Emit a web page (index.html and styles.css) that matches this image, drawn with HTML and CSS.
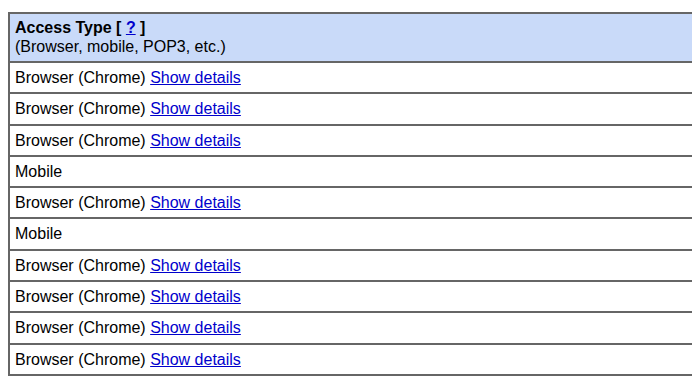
FILE: index.html
```html
<!DOCTYPE html>
<html>
<head>
<meta charset="utf-8">
<link rel="stylesheet" href="styles.css">
</head>
<body>
<table class="activity">
  <thead>
    <tr>
      <th class="col-type"><b>Access Type [ <a href="#">?</a> ]</b><br><span class="sub">(Browser, mobile, POP3, etc.)</span></th>
      <th class="col-more"></th>
    </tr>
  </thead>
  <tbody>
    <tr><td>Browser (Chrome) <a href="#">Show details</a></td><td class="col-more"></td></tr>
    <tr><td>Browser (Chrome) <a href="#">Show details</a></td><td class="col-more"></td></tr>
    <tr><td>Browser (Chrome) <a href="#">Show details</a></td><td class="col-more"></td></tr>
    <tr><td>Mobile</td><td class="col-more"></td></tr>
    <tr><td>Browser (Chrome) <a href="#">Show details</a></td><td class="col-more"></td></tr>
    <tr><td>Mobile</td><td class="col-more"></td></tr>
    <tr><td>Browser (Chrome) <a href="#">Show details</a></td><td class="col-more"></td></tr>
    <tr><td>Browser (Chrome) <a href="#">Show details</a></td><td class="col-more"></td></tr>
    <tr><td>Browser (Chrome) <a href="#">Show details</a></td><td class="col-more"></td></tr>
    <tr><td>Browser (Chrome) <a href="#">Show details</a></td><td class="col-more"></td></tr>
  </tbody>
</table>
</body>
</html>
```
FILE: styles.css
```css
html, body {
  overflow: hidden;
}
body {
  margin: 12px 8px 8px;
  font-family: "Liberation Sans", Arial, sans-serif;
  font-size: 16px;
  color: #000;
  background: #fff;
}
.activity {
  border-collapse: collapse;
  width: 692px;
  table-layout: fixed;
}
.activity th,
.activity td {
  border: 2px solid #666;
  text-align: left;
  vertical-align: top;
  line-height: 19px;
  padding: 5px 5px 5.3px;
  white-space: nowrap;
}
.activity th {
  background: #c9daf9;
  font-weight: normal;
  padding-bottom: 5px;
  line-height: 18.5px;
}
.activity .col-type {
  width: 676px;
}
.activity .col-more {
  border-right: 0;
  padding: 0;
}
.activity a {
  color: #0000cc;
  text-decoration: underline;
}
```
